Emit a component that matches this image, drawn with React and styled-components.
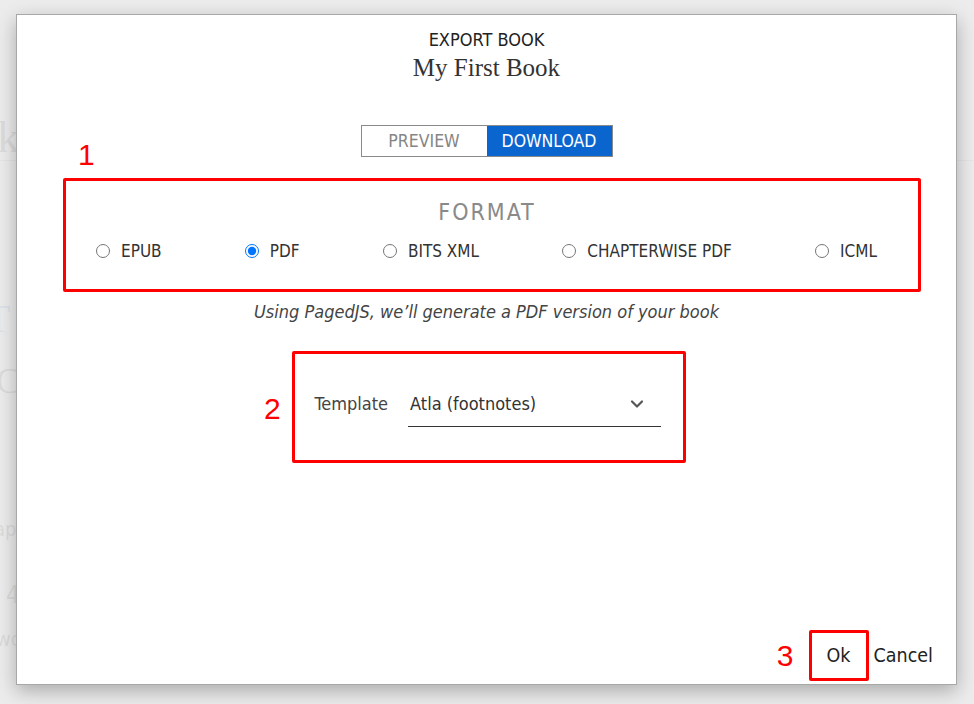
import React, { useState } from 'react';
import styled, { createGlobalStyle } from 'styled-components';
import { ChevronDown } from 'lucide-react';

const ui = `"Liberation Sans Narrow", "DejaVu Sans Condensed", "Liberation Sans", sans-serif`;
const serif = `"Liberation Serif", "DejaVu Serif", serif`;

const Global = createGlobalStyle`
  html, body {
    margin: 0;
    padding: 0;
    height: 100%;
    background: #ececec;
    font-family: ${ui};
  }
  #root {
    height: 100%;
  }
`;

const Page = styled.div`
  position: relative;
  height: 704px;
  overflow: hidden;
  background: #ececec;
  color: #c4c4c4;
  font-family: ${serif};
`;

const PageHeader = styled.div`
  display: flex;
  align-items: flex-end;
  height: 150px;
  border-bottom: 1px solid #dcdcdc;
  margin-top: 10px;
`;

const BigFaded = styled.div`
  font-size: ${(p) => p.size || 40}px;
  color: ${(p) => p.color || '#c8c8c8'};
  margin-left: ${(p) => p.offset || 0}px;
  margin-top: ${(p) => p.top || 0}px;
  line-height: 1;
  font-family: ${(p) => (p.sans ? ui : serif)};
`;

const Backdrop = styled.div`
  position: absolute;
  inset: 0;
  background: rgba(236, 236, 236, 0.55);
`;

const Modal = styled.div`
  position: absolute;
  left: 16px;
  top: 14px;
  width: 941px;
  height: 671px;
  background: #fff;
  border: 1px solid #a8a8a8;
  box-shadow: 0 6px 18px rgba(0, 0, 0, 0.28);
  display: flex;
  flex-direction: column;
  align-items: center;
  box-sizing: border-box;
  padding-top: 14px;
  color: #222;
`;

const Kicker = styled.div`
  font-family: ${ui};
  font-size: 18px;
  line-height: 22px;
  color: #222;
`;

const BookTitle = styled.h1`
  margin: 2px 0 0;
  font-family: ${serif};
  font-weight: normal;
  font-size: 25px;
  line-height: 30px;
  color: #333;
`;

const Toggle = styled.div`
  display: flex;
  margin-top: 42px;
  border: 1px solid #8a8a8a;
`;

const ToggleButton = styled.button`
  width: ${(p) => p.w}px;
  height: 30px;
  border: none;
  margin: 0;
  padding: 0;
  font-family: ${ui};
  font-size: 17.5px;
  text-transform: uppercase;
  cursor: pointer;
  background: ${(p) => (p.active ? '#0b65cf' : '#fff')};
  color: ${(p) => (p.active ? '#fff' : '#858585')};
`;

const Section = styled.div`
  position: relative;
  align-self: stretch;
  display: flex;
  justify-content: center;
`;

const Marker = styled.span`
  position: absolute;
  font-family: "Liberation Sans", sans-serif;
  font-size: 30px;
  line-height: 1;
  color: #f00;
  left: ${(p) => p.x}px;
  top: ${(p) => p.y}px;
`;

const StepNumber = styled.span`
  font-family: "Liberation Sans", sans-serif;
  font-size: 30px;
  line-height: 1;
  color: #f00;
  margin-right: 15px;
`;

const RedBox = styled.div`
  border: 3px solid #f00;
  border-radius: 2px;
  box-sizing: border-box;
`;

const FormatBox = styled(RedBox)`
  margin-top: 21px;
  margin-left: 11px;
  width: 858px;
  height: 114px;
  display: flex;
  flex-direction: column;
  align-items: center;
  padding: 17px 0 0;
`;

const FormatTitle = styled.div`
  font-family: ${ui};
  font-size: 23px;
  letter-spacing: 2px;
  color: #8a8a8a;
  line-height: 28px;
  margin-right: 10px;
`;

const RadioRow = styled.div`
  align-self: stretch;
  display: flex;
  justify-content: space-between;
  padding: 0 41px 0 30px;
  margin-top: 15px;
`;

const RadioLabel = styled.label`
  display: flex;
  align-items: center;
  gap: 11px;
  font-family: ${ui};
  font-size: 17px;
  color: #333;
  cursor: pointer;

  input {
    margin: 0;
    width: 14px;
    height: 14px;
  }
`;

const Hint = styled.p`
  margin: 9px 0 0;
  font-family: ${ui};
  font-style: italic;
  font-size: 18px;
  color: #444;
`;

const TemplateBox = styled(RedBox)`
  margin-top: 29px;
  margin-left: 4px;
  width: 394px;
  height: 112px;
  display: flex;
  align-items: center;
  padding: 0 22px 0 20px;
  gap: 20px;
`;

const FieldLabel = styled.span`
  font-family: ${ui};
  font-size: 18px;
  color: #444;
  margin-top: -8px;
`;

const Select = styled.div`
  flex: 1;
  display: flex;
  align-items: center;
  justify-content: space-between;
  height: 38px;
  border-bottom: 1px solid #333;
  padding: 0 14px 8px 2px;
  box-sizing: border-box;
  font-family: ${ui};
  font-size: 18px;
  color: #333;
  margin-top: 2px;
`;

const Footer = styled.div`
  margin-top: auto;
  align-self: stretch;
  display: flex;
  justify-content: flex-end;
  align-items: center;
  padding: 0 23px 3px 0;
`;

const OkBox = styled(RedBox)`
  width: 60px;
  height: 51px;
  display: flex;
  align-items: center;
  justify-content: center;
`;

const FooterButton = styled.button`
  border: none;
  background: none;
  padding: 0;
  margin: 0 0 0 ${(p) => p.gap || 0}px;
  font-family: ${ui};
  font-size: 19.5px;
  color: #222;
  cursor: pointer;
`;

const formats = ['EPUB', 'PDF', 'BITS XML', 'CHAPTERWISE PDF', 'ICML'];

export default function App() {
  const [format, setFormat] = useState('PDF');
  const [tab, setTab] = useState('download');

  return (
    <>
      <Global />
      <Page>
        <PageHeader>
          <BigFaded size={44} offset={-76}>Book</BigFaded>
        </PageHeader>
        <BigFaded size={40} offset={-14} top={138} color="#c9d3e6">T</BigFaded>
        <BigFaded size={36} offset={-4} top={24}>Co</BigFaded>
        <BigFaded size={20} offset={-6} top={120} sans>ap</BigFaded>
        <BigFaded size={24} offset={6} top={44} sans>4</BigFaded>
        <BigFaded size={20} offset={-4} top={22} sans>wo</BigFaded>
        <Backdrop />

        <Modal>
          <Kicker>EXPORT BOOK</Kicker>
          <BookTitle>My First Book</BookTitle>

          <Toggle>
            <ToggleButton w={125} active={tab === 'preview'} onClick={() => setTab('preview')}>
              Preview
            </ToggleButton>
            <ToggleButton w={125} active={tab === 'download'} onClick={() => setTab('download')}>
              Download
            </ToggleButton>
          </Toggle>

          <Section>
            <Marker x={61} y={-17}>1</Marker>
            <FormatBox>
              <FormatTitle>FORMAT</FormatTitle>
              <RadioRow>
                {formats.map((f) => (
                  <RadioLabel key={f}>
                    <input
                      type="radio"
                      name="format"
                      checked={format === f}
                      onChange={() => setFormat(f)}
                    />
                    <span>{f}</span>
                  </RadioLabel>
                ))}
              </RadioRow>
            </FormatBox>
          </Section>

          <Hint>Using PagedJS, we’ll generate a PDF version of your book</Hint>

          <Section>
            <Marker x={247} y={72}>2</Marker>
            <TemplateBox>
              <FieldLabel>Template</FieldLabel>
              <Select>
                <span>Atla (footnotes)</span>
                <ChevronDown size={20} strokeWidth={2.6} color="#555" />
              </Select>
            </TemplateBox>
          </Section>

          <Footer>
            <StepNumber>3</StepNumber>
            <OkBox>
              <FooterButton>Ok</FooterButton>
            </OkBox>
            <FooterButton gap={5}>Cancel</FooterButton>
          </Footer>
        </Modal>
      </Page>
    </>
  );
}
